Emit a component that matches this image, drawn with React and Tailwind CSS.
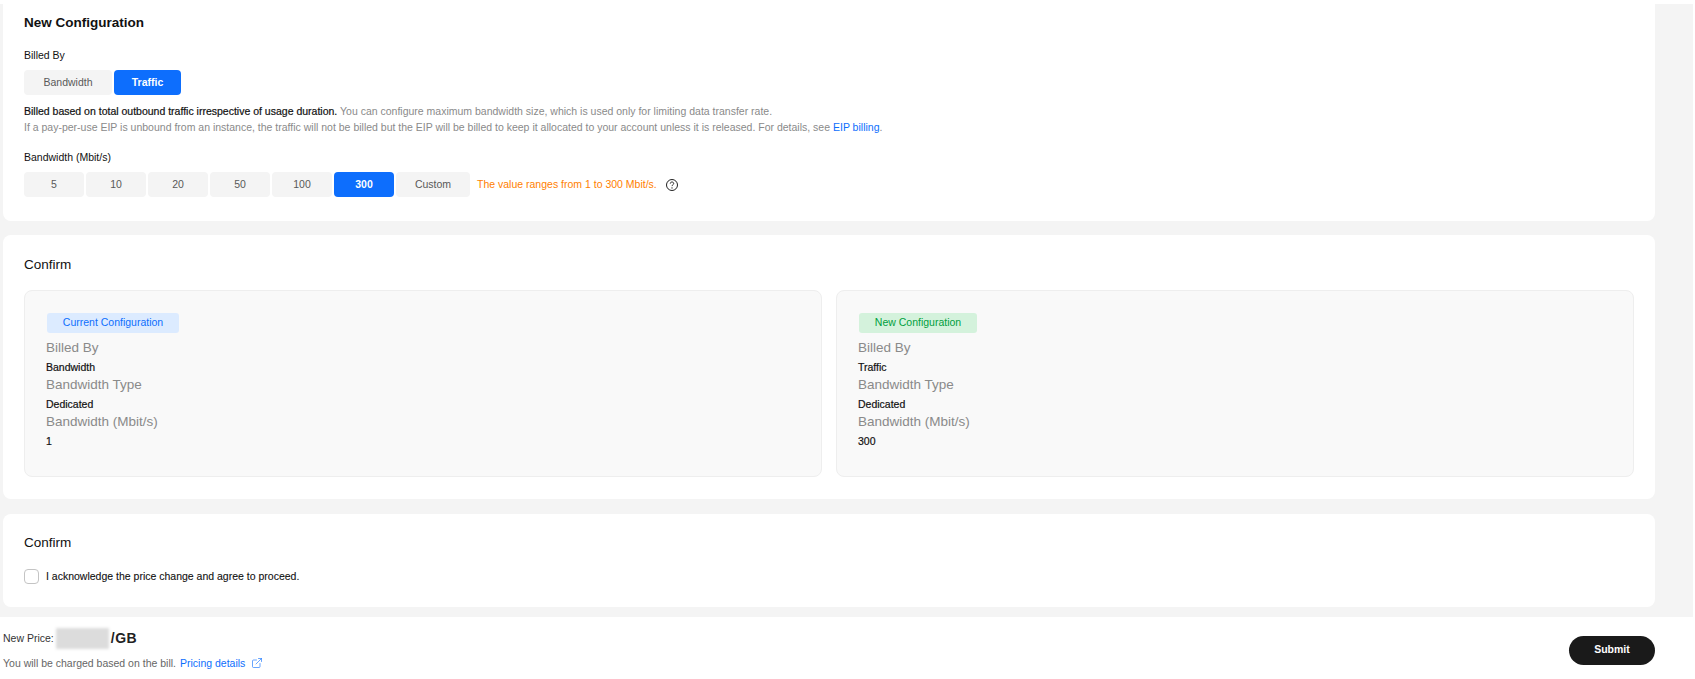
import React from "react";
import { ExternalLink } from "lucide-react";

const OptionButton = ({ label, active, className = "" }) => {
  return (
    <div
      className={`flex items-center justify-center h-[25px] rounded-[4px] text-[10.5px] ${
        active ? "bg-[#0d6efd] text-white font-bold" : "bg-[#f4f4f4] text-[#595959]"
      } ${className}`}
    >
      {label}
    </div>
  );
};

const SummaryBox = ({ badge, badgeClass, values }) => {
  const labels = ["Billed By", "Bandwidth Type", "Bandwidth (Mbit/s)"];
  return (
    <div className="flex-1 h-[187px] rounded-[8px] border border-[#eeeeee] bg-[#f9f9f9] pl-[22px] pt-[22px]">
      <div
        className={`flex items-center justify-center h-[20px] rounded-[3px] text-[10.5px] ${badgeClass}`}
      >
        {badge}
      </div>
      <div className="mt-[5px] ml-[-1px]">
        {labels.map((label, i) => (
          <div key={label}>
            <div className="h-[19px] text-[13.5px] leading-[19px] text-[#8a8a8a]">{label}</div>
            <div className="h-[18px] text-[10.5px] leading-[20px] text-[#111111] [-webkit-text-stroke:0.2px_#111111]">
              {values[i]}
            </div>
          </div>
        ))}
      </div>
    </div>
  );
};

export default function App() {
  return (
    <div className="flex flex-col h-[679px] overflow-hidden bg-white pt-1 font-['Liberation_Sans',Arial,sans-serif] text-[#111111]">
      <div className="flex flex-col h-[613px] mr-[2px] pl-[3px] pr-[38px] bg-[#f4f4f4] shrink-0">
        {/* new configuration */}
        <section className="h-[217px] bg-white rounded-b-[8px] pl-[21px] pt-[11px]">
          <h3 className="text-[13.5px] leading-[16px] font-bold">New Configuration</h3>
          <div className="mt-[18px] text-[10.5px] leading-[12px]">Billed By</div>
          <div className="flex gap-[2px] mt-[9px]">
            <OptionButton label="Bandwidth" className="w-[88px]" />
            <OptionButton label="Traffic" active className="w-[67px]" />
          </div>
          <p className="mt-[8px] text-[10.5px] leading-[16px] text-[#8a8a8a]">
            <span className="text-[#111111] [-webkit-text-stroke:0.2px_#111111]">
              Billed based on total outbound traffic irrespective of usage duration.
            </span>{" "}
            You can configure maximum bandwidth size, which is used only for limiting data transfer rate.
            <br />
            If a pay-per-use EIP is unbound from an instance, the traffic will not be billed but the EIP
            will be billed to keep it allocated to your account unless it is released. For details, see{" "}
            <span className="text-[#0d6efd]">EIP billing</span>.
          </p>
          <div className="mt-[16px] text-[10.5px] leading-[12px]">Bandwidth (Mbit/s)</div>
          <div className="flex items-center mt-[9px]">
            <div className="flex gap-[2px]">
              <OptionButton label="5" className="w-[60px]" />
              <OptionButton label="10" className="w-[60px]" />
              <OptionButton label="20" className="w-[60px]" />
              <OptionButton label="50" className="w-[60px]" />
              <OptionButton label="100" className="w-[60px]" />
              <OptionButton label="300" active className="w-[60px]" />
              <OptionButton label="Custom" className="w-[74px]" />
            </div>
            <span className="ml-[7px] text-[10.5px] text-[#ff8000]">The value ranges from 1 to 300 Mbit/s.</span>
            <svg className="ml-[8px]" width="14" height="14" viewBox="0 0 14 14" fill="none">
              <circle cx="7" cy="7" r="5.5" stroke="#222222" />
              <path
                d="M5.3 5.6C5.3 4.6 6 4 7 4s1.7.6 1.7 1.5c0 1.3-1.7 1.3-1.7 2.6"
                stroke="#222222"
              />
              <circle cx="7" cy="9.9" r=".7" fill="#222222" />
            </svg>
          </div>
        </section>

        {/* confirm summary */}
        <section className="h-[264px] mt-[14px] bg-white rounded-[8px] px-[21px] pt-[22px]">
          <h3 className="text-[13.5px] leading-[16px] font-medium">Confirm</h3>
          <div className="flex gap-[14px] mt-[17px]">
            <SummaryBox
              badge="Current Configuration"
              badgeClass="w-[132px] bg-[#dcebff] text-[#0d6efd]"
              values={["Bandwidth", "Dedicated", "1"]}
            />
            <SummaryBox
              badge="New Configuration"
              badgeClass="w-[118px] bg-[#d4f2dc] text-[#00a03c]"
              values={["Traffic", "Dedicated", "300"]}
            />
          </div>
        </section>

        {/* agreement */}
        <section className="h-[93px] mt-[15px] bg-white rounded-[8px] pl-[21px] pt-[21px]">
          <h3 className="text-[13.5px] leading-[16px] font-medium">Confirm</h3>
          <label className="flex items-center mt-[18px]">
            <span className="w-[15px] h-[15px] rounded-[4px] border border-[#c4c4c4] bg-white" />
            <span className="ml-[7px] text-[10.5px] leading-[15px] [-webkit-text-stroke:0.1px_#111111]">
              I acknowledge the price change and agree to proceed.
            </span>
          </label>
        </section>
      </div>

      {/* footer */}
      <footer className="flex flex-1 items-center justify-between mr-[40px] pl-[3px] bg-white">
        <div>
          <div className="flex items-center h-[22px] mt-[2px]">
            <span className="text-[10.5px] text-[#333333]">New Price:</span>
            <span className="w-[53px] h-[21px] ml-[2px] bg-[#dcdcdc] blur-[1.5px]" />
            <span className="ml-[2px] text-[14px] font-bold tracking-[0.5px] text-[#222222]">/GB</span>
          </div>
          <div className="flex items-center mt-[5px] text-[10.5px] leading-[16px] text-[#666666]">
            You will be charged based on the bill.
            <span className="ml-[4px] text-[#0d6efd]">Pricing details</span>
            <ExternalLink className="ml-[6px] text-[#0d6efd]" size={12} strokeWidth={1.25} />
          </div>
        </div>
        <button className="flex items-center justify-center w-[86px] h-[29px] mt-[4px] rounded-full bg-[#1a1a1a] text-white text-[10.5px] font-bold">
          Submit
        </button>
      </footer>
    </div>
  );
}
